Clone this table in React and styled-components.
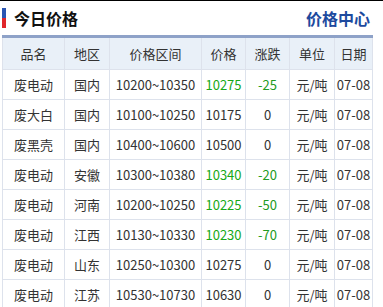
import React from 'react';
import styled, { createGlobalStyle } from 'styled-components';

const GlobalStyle = createGlobalStyle`
  body {
    margin: 0;
    background: #fff;
    font-family: 'Noto Sans CJK SC', 'Noto Sans', sans-serif;
  }
`;

const Wrapper = styled.div`
  width: 383px;
  border-top: 1px solid #000;
`;

const Header = styled.div`
  display: flex;
  align-items: center;
  justify-content: space-between;
  height: 34px;
  padding: 0 13px 0 2px;
  box-sizing: border-box;
`;

const TitleBox = styled.div`
  display: flex;
  align-items: center;
  gap: 8px;
`;

const Bar = styled.div`
  width: 4px;
  height: 20px;
  background: linear-gradient(#2a55b2 0 50%, #e0262a 50% 100%);
`;

const Title = styled.span`
  font-size: 16px;
  font-weight: 700;
  color: #111;
`;

const More = styled.a`
  font-size: 16px;
  font-weight: 700;
  color: #1d4a9e;
  text-decoration: none;
`;

const Table = styled.table`
  margin-left: 2px;
  width: 370px;
  border-collapse: collapse;
  table-layout: fixed;
  border-top: 3px solid #8ea2c8;
  font-size: 13px;
  color: #333;
`;

const Th = styled.th`
  height: 31px;
  padding: 0;
  font-weight: 400;
  background: #e9f0f8;
  border: 1px solid #dde2ec;
  border-top: none;
  text-align: center;
`;

const Td = styled.td`
  height: 29px;
  padding: 0;
  border: 1px solid #dde2ec;
  text-align: center;
  white-space: nowrap;
  color: ${p => (p.$tone === 'price' ? '#17a817' : p.$tone === 'change' ? '#229a22' : '#333')};
`;

const widths = [62, 45, 92, 44, 44, 45, 38];
const heads = ['品名', '地区', '价格区间', '价格', '涨跌', '单位', '日期'];

const rows = [
  ['废电动', '国内', '10200~10350', '10275', '-25'],
  ['废大白', '国内', '10100~10250', '10175', '0'],
  ['废黑壳', '国内', '10400~10600', '10500', '0'],
  ['废电动', '安徽', '10300~10380', '10340', '-20'],
  ['废电动', '河南', '10200~10250', '10225', '-50'],
  ['废电动', '江西', '10130~10330', '10230', '-70'],
  ['废电动', '山东', '10250~10300', '10275', '0'],
  ['废电动', '江苏', '10530~10730', '10630', '0'],
];

export default function App() {
  return (
    <Wrapper>
      <GlobalStyle />
      <Header>
        <TitleBox>
          <Bar />
          <Title>今日价格</Title>
        </TitleBox>
        <More href="#">价格中心</More>
      </Header>
      <Table>
        <colgroup>
          {widths.map((w, i) => (
            <col key={i} style={{ width: w }} />
          ))}
        </colgroup>
        <thead>
          <tr>
            {heads.map(h => (
              <Th key={h}>{h}</Th>
            ))}
          </tr>
        </thead>
        <tbody>
          {rows.map((r, i) => {
            const down = r[4] !== '0';
            return (
              <tr key={i}>
                <Td>{r[0]}</Td>
                <Td>{r[1]}</Td>
                <Td>{r[2]}</Td>
                <Td $tone={down ? 'price' : undefined}>{r[3]}</Td>
                <Td $tone={down ? 'change' : undefined}>{r[4]}</Td>
                <Td>元/吨</Td>
                <Td>07-08</Td>
              </tr>
            );
          })}
        </tbody>
      </Table>
    </Wrapper>
  );
}
